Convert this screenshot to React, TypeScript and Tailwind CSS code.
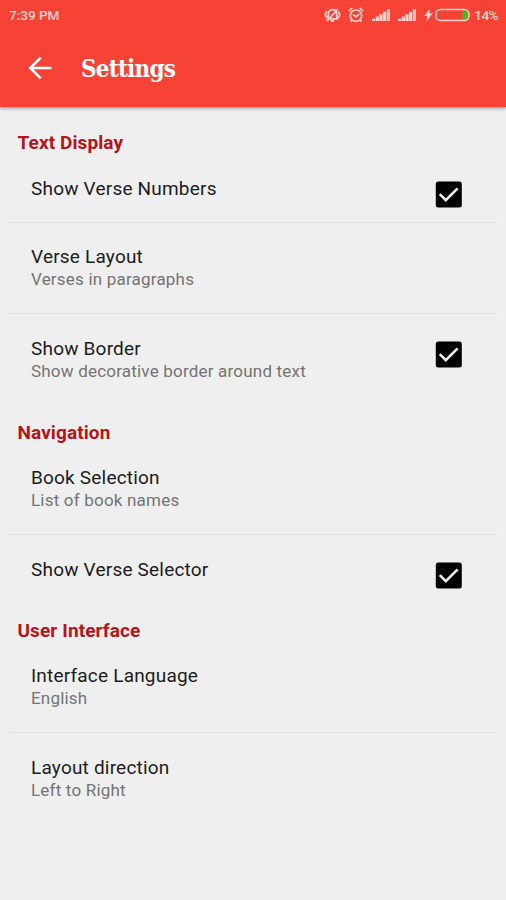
import { useState } from "react";

type Item = {
  title: string;
  summary?: string;
  checkable?: boolean;
};

type Section = {
  name: string;
  items: Item[];
};

const SECTIONS: Section[] = [
  {
    name: "Text Display",
    items: [
      { title: "Show Verse Numbers", checkable: true },
      { title: "Verse Layout", summary: "Verses in paragraphs" },
      {
        title: "Show Border",
        summary: "Show decorative border around text",
        checkable: true,
      },
    ],
  },
  {
    name: "Navigation",
    items: [
      { title: "Book Selection", summary: "List of book names" },
      { title: "Show Verse Selector", checkable: true },
    ],
  },
  {
    name: "User Interface",
    items: [
      { title: "Interface Language", summary: "English" },
      { title: "Layout direction", summary: "Left to Right" },
    ],
  },
];

export default function App() {
  return (
    <div className="min-h-screen bg-[#efefef] font-['Roboto',sans-serif]">
      <header className="h-[107px] bg-[#f64336] text-white shadow-[0_1px_4px_rgba(0,0,0,0.45)]">
        <StatusBar />
        <div className="flex h-[77px] items-center pl-[28px]">
          <button aria-label="Back" className="-mt-[1px]">
            <svg width="24" height="24" viewBox="0 0 24 24" fill="none" stroke="currentColor" strokeWidth="2.7">
              <path d="M23.5 12H3M12.7 1.6L2.3 12l10.4 10.4" />
            </svg>
          </button>
          <h1 className="mt-[1px] ml-[29px] font-['Roboto_Slab','DejaVu_Serif',serif] text-[24px] leading-none font-bold tracking-[-0.8px] [font-stretch:condensed]">
            Settings
          </h1>
        </div>
      </header>

      <main className="pt-[8px]">
        {SECTIONS.map((s) => (
          <section key={s.name}>
            <h2 className="pt-[16px] pl-[17.5px] text-[19px] leading-[23px] font-bold tracking-[0.1px] text-[#b71319]">
              {s.name}
            </h2>
            <ul className="mx-[9px] divide-y divide-[#dedede]">
              {s.items.map((it) => (
                <SettingRow key={it.title} item={it} />
              ))}
            </ul>
          </section>
        ))}
      </main>
    </div>
  );
}

function SettingRow({ item }: { item: Item }) {
  const [checked, setChecked] = useState(true);

  return (
    <li className="flex justify-between pr-[35px] pl-[22px]">
      <div className="pt-[22.5px] pb-[22px]">
        <div className="text-[19px] leading-[23px] tracking-[0.2px] text-[#1c1c1c]">
          {item.title}
        </div>
        {item.summary && (
          <div className="text-[17px] leading-[23px] tracking-[0.2px] text-[#747474]">
            {item.summary}
          </div>
        )}
      </div>
      {item.checkable && (
        <button
          role="checkbox"
          aria-label={item.title}
          aria-checked={checked}
          className="mt-[27px] size-[27px] shrink-0"
          onClick={() => setChecked(!checked)}
        >
          <svg width="27" height="27" viewBox="0 0 27 27" fill="none">
            <rect x="0.8" y="0.5" width="26" height="26" rx="2.5" fill="#000" />
            {checked && (
              <path d="M4.800 13.2l6 6L22.600 7.4" stroke="#efefef" strokeWidth="2.6" />
            )}
          </svg>
        </button>
      )}
    </li>
  );
}

function StatusBar() {
  return (
    <div className="flex h-[30px] items-center justify-between pr-[8px] pl-[9px] text-[13.5px] font-medium text-[#ffd3cf]">
      <span>7:39 PM</span>
      <div className="flex items-center">
        <MutedIcon />
        <AlarmIcon />
        <SignalIcon />
        <SignalIcon />
        <svg className="mr-[2px]" width="9" height="14" viewBox="0 0 9 14" fill="currentColor">
          <path d="M6 0.500L0.300 7.900h3L2.300 13.500l6.400-8H5.300z" />
        </svg>
        <svg className="mr-[4px]" width="35" height="14" viewBox="0 0 35 14">
          <path d="M27.500 2.500h3a5 5 0 010 9h-3z" fill="#48b91b" />
          <rect x="0.9" y="1.4" width="33" height="11.2" rx="4.6" fill="none" stroke="currentColor" strokeWidth="1.5" />
        </svg>
        <span className="tracking-[-0.5px]">14%</span>
      </div>
    </div>
  );
}

function MutedIcon() {
  return (
    <svg className="mr-[7px]" width="17" height="16" viewBox="0 0 17 16" fill="none" stroke="currentColor" strokeWidth="1.8">
      <path d="M3.800 11.800C4.600 10.500 4.200 9 4.300 7.500c0-3 1.700-4.900 4.200-4.900s4.200 1.900 4.200 4.900c0.100 1.500-0.300 3 0.500 4.300z" />
      <path d="M6.800 14h3.400M3 14L14 2M2.600 4L1.200 7.500l1.400 3M14.400 4.500l1.400 3-1.400 3.500" />
    </svg>
  );
}

function AlarmIcon() {
  return (
    <svg className="mr-[8px]" width="16" height="16" viewBox="0 0 16 16" fill="none" stroke="currentColor" strokeWidth="1.7">
      <circle cx="8" cy="8.700" r="5.700" />
      <path d="M5 7.500l3 2.200 3.200-2.700M1 4l3.200-2.800M15 4l-3.200-2.800M3.800 13.200l-1.300 1.500M12.200 13.200l1.300 1.500" />
    </svg>
  );
}

function SignalIcon() {
  return (
    <svg className="mr-[8px]" width="18" height="14" viewBox="0 0 18 14" fill="currentColor">
      <path d="M0 10.800h3.200V13H0zM3.700 8.600h3.200V13H3.700zM7.400 6.200h3.200V13H7.400zM11.100 3.800h3.200V13h-3.200z" />
      <path d="M14.800 1.200H18V13h-3.200z" opacity="0.85" />
    </svg>
  );
}
